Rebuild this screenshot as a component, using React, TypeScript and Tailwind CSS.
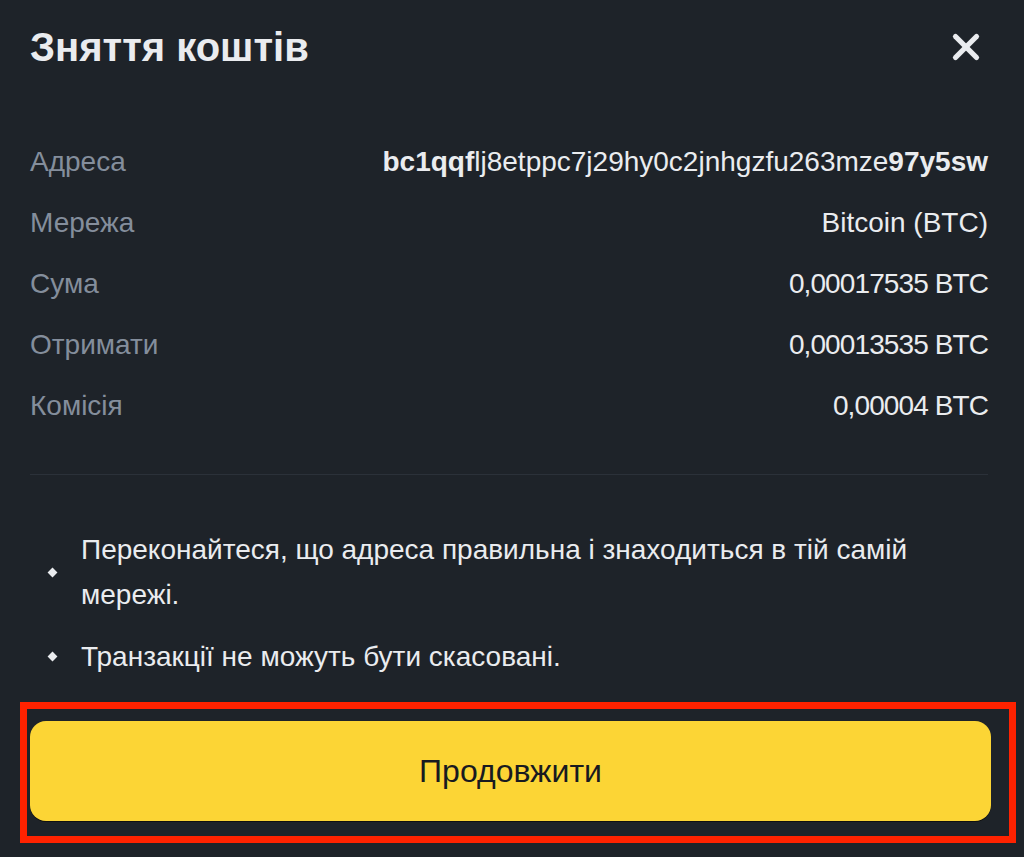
import { X } from "lucide-react";

const rows: { label: string; value: React.ReactNode; num?: boolean }[] = [
  {
    label: "Адреса",
    value: (
      <>
        <span className="font-bold">bc1qqf</span>lj8etppc7j29hy0c2jnhgzfu263mze
        <span className="font-bold">97y5sw</span>
      </>
    ),
  },
  { label: "Мережа", value: "Bitcoin (BTC)" },
  { label: "Сума", value: "0,00017535 BTC", num: true },
  { label: "Отримати", value: "0,00013535 BTC", num: true },
  { label: "Комісія", value: "0,00004 BTC", num: true },
];

const notes = [
  "Переконайтеся, що адреса правильна і знаходиться в тій самій мережі.",
  "Транзакції не можуть бути скасовані.",
];

export default function App() {
  return (
    <div
      className="w-[1024px] h-[857px] overflow-hidden bg-[#1e2329] pl-[30px] pr-[33px]"
      style={{ fontFamily: '"Liberation Sans", Arial, sans-serif' }}
    >
      {/* Header */}
      <div className="flex items-center justify-between pt-[24px]">
        <h1 className="text-[40px] leading-[46px] font-bold text-[#eaecef]">Зняття коштів</h1>
        <button aria-label="Close" className="text-[#eaecef] mr-[4px]">
          <X className="w-[42px] h-[42px]" strokeWidth={3} />
        </button>
      </div>

      {/* Details */}
      <div className="mt-[61px] pr-[3px]">
        {rows.map((r) => (
          <div key={r.label} className="flex h-[61px] items-center justify-between text-[28px]">
            <span className="text-[#848e9c]">{r.label}</span>
            <span className={r.num ? "text-[#eaecef] tracking-[-0.9px]" : "text-[#eaecef]"}>
              {r.value}
            </span>
          </div>
        ))}
      </div>

      <div className="mt-[38px] h-px bg-[#2b3139] mr-[3px]" />

      {/* Notes */}
      <ul className="mt-[52px] flex flex-col gap-[17px]">
        {notes.map((n) => (
          <li key={n} className="flex items-center gap-[25px] text-[28px] leading-[45px] text-[#eaecef]">
            <span className="ml-[19px] w-[7px] h-[7px] rotate-45 bg-[#eaecef] shrink-0" />
            <span className="max-w-[880px]">{n}</span>
          </li>
        ))}
      </ul>

      {/* Action, outlined in red */}
      <div className="mt-[23px] ml-[-10px] mr-[-25px] border-[7px] border-[#ff2200] pt-[12px] pb-[15px] pl-[3px] pr-[18px]">
        <button className="w-full h-[100px] rounded-[16px] bg-[#fcd535] text-[32px] text-[#181a20] shadow-[0_1px_0_#111]">
          Продовжити
        </button>
      </div>
    </div>
  );
}
